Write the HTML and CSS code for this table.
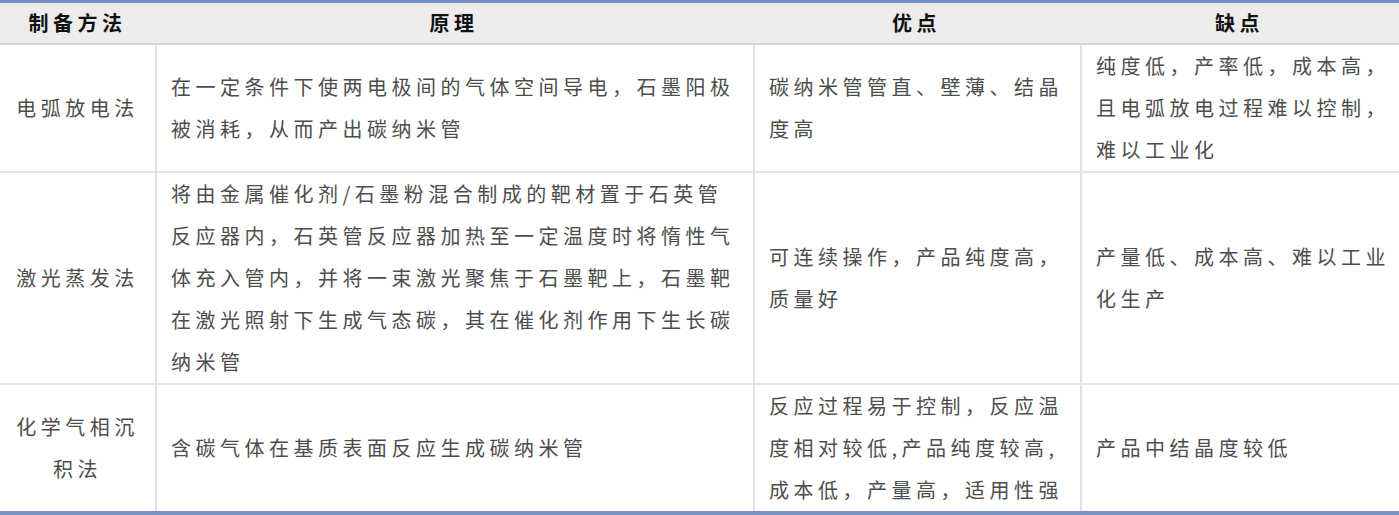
FILE: index.html
```html
<!DOCTYPE html>
<html lang="zh">
<head>
<meta charset="utf-8">
<link rel="stylesheet" href="styles.css">
</head>
<body>
<table class="cmp">
  <colgroup>
    <col class="c1"><col class="c2"><col class="c3"><col class="c4">
  </colgroup>
  <thead>
    <tr><th>制备方法</th><th>原理</th><th>优点</th><th>缺点</th></tr>
  </thead>
  <tbody>
    <tr>
      <td class="m">电弧放电法</td>
      <td>在一定条件下使两电极间的气体空间导电，石墨阳极被消耗，从而产出碳纳米管</td>
      <td>碳纳米管管直、壁薄、结晶度高</td>
      <td>纯度低，产率低，成本高，且电弧放电过程难以控制，难以工业化</td>
    </tr>
    <tr>
      <td class="m">激光蒸发法</td>
      <td>将由金属催化剂/石墨粉混合制成的靶材置于石英管反应器内，石英管反应器加热至一定温度时将惰性气体充入管内，并将一束激光聚焦于石墨靶上，石墨靶在激光照射下生成气态碳，其在催化剂作用下生长碳纳米管</td>
      <td>可连续操作，产品纯度高，质量好</td>
      <td>产量低、成本高、难以工业化生产</td>
    </tr>
    <tr class="last">
      <td class="m">化学气相沉积法</td>
      <td>含碳气体在基质表面反应生成碳纳米管</td>
      <td>反应过程易于控制，反应温度相对较低,产品纯度较高,成本低，产量高，适用性强</td>
      <td>产品中结晶度较低</td>
    </tr>
  </tbody>
</table>
</body>
</html>
```

FILE: styles.css
```css
html, body {
  margin: 0;
  padding: 0;
  background: #ffffff;
}

.cmp {
  width: 1399px;
  table-layout: fixed;
  border-collapse: separate;
  border-spacing: 0;
  border-top: 3px solid #7390c2;
  border-bottom: 4px solid #7592c4;
  font-family: "Noto Sans CJK SC", "Noto Sans", sans-serif;
  font-size: 20px;
  letter-spacing: 4.5px;
}

.c1 { width: 155px; }
.c2 { width: 598px; }
.c3 { width: 327px; }
.c4 { width: 319px; }

.cmp th {
  height: 40px;
  padding: 0;
  background: #ececec;
  border-bottom: 2px solid #d6d6d6;
  color: #111111;
  font-weight: 700;
  text-align: center;
  line-height: 40px;
}

.cmp td {
  padding: 0 8px 0 14px;
  line-height: 42px;
  color: #4d4d4d;
  vertical-align: middle;
  border-left: 2px solid #e3e3e3;
  border-bottom: 2px solid #e3e3e3;
}

.cmp td.m {
  border-left: none;
  text-align: center;
  padding: 0 10px;
}

.cmp tr.last td {
  border-bottom: none;
}
```
